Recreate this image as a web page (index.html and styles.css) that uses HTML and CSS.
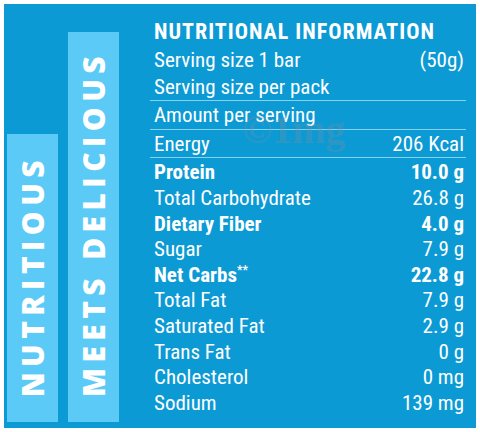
FILE: index.html
```html
<!DOCTYPE html>
<html>
<head>
<meta charset="utf-8">
<link rel="stylesheet" href="styles.css">
</head>
<body>
<div class="panel">
  <div class="bars">
    <div class="bar bar-short"><span class="bar-text">NUTRITIOUS</span></div>
    <div class="bar bar-tall"><span class="bar-text">MEETS DELICIOUS</span></div>
  </div>
  <div class="facts">
    <div class="title">NUTRITIONAL INFORMATION</div>
    <div class="row top1"><span>Serving size 1 bar</span><span>(50g)</span></div>
    <div class="row top2"><span>Serving size per pack</span></div>
    <div class="row ruled"><span>Amount per serving</span></div>
    <div class="row ruled"><span>Energy</span><span>206 Kcal</span></div>
    <div class="row ruled bold"><span>Protein</span><span>10.0 g</span></div>
    <div class="row"><span>Total Carbohydrate</span><span>26.8 g</span></div>
    <div class="row bold"><span>Dietary Fiber</span><span>4.0 g</span></div>
    <div class="row"><span>Sugar</span><span>7.9 g</span></div>
    <div class="row bold"><span>Net Carbs<sup class="stars">**</sup></span><span>22.8 g</span></div>
    <div class="row"><span>Total Fat</span><span>7.9 g</span></div>
    <div class="row"><span>Saturated Fat</span><span>2.9 g</span></div>
    <div class="row"><span>Trans Fat</span><span>0 g</span></div>
    <div class="row"><span>Cholesterol</span><span>0 mg</span></div>
    <div class="row"><span>Sodium</span><span>139 mg</span></div>
    <div class="watermark">©1mg</div>
  </div>
</div>
</body>
</html>
```
FILE: styles.css
```css
* { box-sizing: border-box; }
html, body { margin: 0; padding: 0; background: #ffffff; }
body { padding: 4px; }
.panel {
  width: 472px;
  height: 424px;
  background: #0c9ad5;
  display: flex;
  padding: 0 10px 6px 3px;
}
.bars {
  display: flex;
  align-items: flex-end;
  gap: 10px;
}
.bar {
  width: 51px;
  background: #5ccaf6;
  display: flex;
  justify-content: center;
  align-items: flex-end;
  padding-bottom: 25px;
}
.bar-short { height: 288px; }
.bar-tall { height: 390px; }
.bar-text {
  writing-mode: vertical-rl;
  transform: rotate(180deg);
  color: #ffffff;
  font-family: "Open Sans", sans-serif;
  font-weight: 800;
  font-size: 30px;
  line-height: 1;
  letter-spacing: 5.4px;
}
.facts {
  position: relative;
  margin-left: 31px;
  flex: 1;
  padding-top: 15px;
  color: #ffffff;
  font-family: "Roboto Condensed", Roboto, sans-serif;
}
.title {
  font-weight: 700;
  font-size: 22px;
  line-height: 26px;
  letter-spacing: 1px;
  padding-left: 4px;
}
.row {
  display: flex;
  justify-content: space-between;
  font-size: 21px;
  line-height: 25.6px;
  padding: 0 2px 0 4px;
}
.row.top1 { margin-top: 3px; }
.row.top2 { margin-top: 1px; }
.row.ruled {
  border-top: 1px solid #86d2f1;
  padding-top: 2px;
}
.row.bold { font-weight: 700; }
.stars { font-size: 12px; vertical-align: 8px; line-height: 0; }
.watermark {
  position: absolute;
  left: 92px;
  top: 102px;
  font-family: "Liberation Serif", serif;
  font-weight: 700;
  font-size: 40px;
  color: rgba(130, 140, 150, 0.3);
  pointer-events: none;
}
```
